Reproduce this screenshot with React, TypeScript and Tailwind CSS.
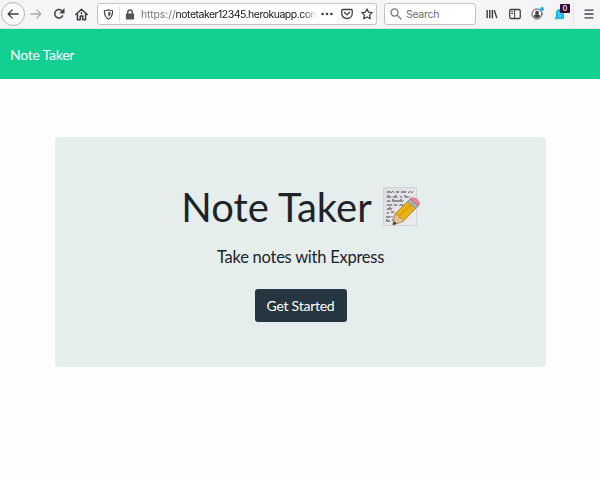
import type { ReactNode } from 'react';

type IconProps = { className?: string; children: ReactNode; box?: string };

function Icon({ className = '', children, box = '0 0 16 16' }: IconProps) {
  return (
    <svg viewBox={box} fill="none" stroke="currentColor" strokeWidth="1.7" strokeLinecap="round" strokeLinejoin="round" className={`shrink-0 ${className}`}>
      {children}
    </svg>
  );
}

function AddressBar() {
  return (
    <div className="ml-[9px] flex h-[22px] w-[280px] shrink-0 items-center rounded-[3px] border border-[#c4c4c7] bg-white text-[#3f3f43]">
      <Icon className="ml-[5px] size-[11px]">
        <path d="M8 1.2c2 .9 4 1.3 6 1.3 0 6-1.200 9.800-6 12.300C3.200 12.300 2 8.500 2 2.500c2 0 4-.4 6-1.300z" />
        <path d="M8 4.500v6.500c2-1.500 2.700-3.300 2.800-5.700z" fill="currentColor" strokeWidth=".5" />
      </Icon>
      <div className="ml-[5px] h-[15px] w-px bg-[#dddde0]" />
      <svg viewBox="0 0 10 12" className="ml-[5px] h-[11px] w-[10px] shrink-0">
        <path d="M2.500 6V3.500a2.500 2.500 0 0 1 5 0V6" fill="none" stroke="#555558" strokeWidth="1.600" />
        <rect x=".5" y="5" width="9" height="6.500" rx="1" fill="#555558" />
      </svg>
      <div className="ml-[6px] w-[176px] pt-px text-[10.500px] leading-[20px] tracking-[-0.500px] whitespace-nowrap text-[#151518] [mask-image:linear-gradient(to_right,black_92%,transparent)]">
        <span className="tracking-[-0.100px] text-[#77777b]">https://</span>notetaker12345.herokuapp.con
      </div>
      <svg viewBox="0 0 12 4" className="ml-[4px] h-[4px] w-[12px] shrink-0" fill="currentColor">
        <circle cx="1.600" cy="2" r="1.350" />
        <circle cx="6" cy="2" r="1.350" />
        <circle cx="10.400" cy="2" r="1.350" />
      </svg>
      <Icon className="ml-[8px] size-[12px]">
        <path d="M2.200 2h11.600c.7 0 1.200.5 1.200 1.200V7c0 4-3 7-7 7s-7-3-7-7V3.200C1 2.500 1.500 2 2.200 2z" />
        <path d="m4.700 6 3.300 3.200L11.300 6" />
      </Icon>
      <Icon className="ml-[8px] size-[12px]">
        <path d="m8 1.200 2.100 4.400 4.800.6-3.500 3.300.9 4.800L8 12l-4.300 2.300.9-4.800-3.500-3.300 4.800-.6z" />
      </Icon>
    </div>
  );
}

function BrowserBar() {
  return (
    <div className="flex h-[29px] items-center border-b border-[#e4dfe3] bg-[#f5f4f7] text-[#3f3f43]">
      <div className="ml-px flex size-[24px] shrink-0 items-center justify-center rounded-full border border-[#b5b5b9] bg-[#fafafc]">
        <Icon className="size-[12px]"><path d="M15 8H1.500M7 2.500 1.500 8 7 13.500" /></Icon>
      </div>
      <Icon className="ml-[5px] size-[12px] text-[#aaaaae]"><path d="M1 8h13.500M9 2.500 14.500 8 9 13.500" /></Icon>
      <Icon className="ml-[11px] size-[12px]">
        <path d="M12.800 10.500A5.600 5.600 0 1 1 12.500 4.500L14 6" strokeWidth="2" />
        <path d="M14.800 1.500v5.300H9.500z" fill="currentColor" strokeWidth="1" />
      </Icon>
      <Icon className="ml-[10px] size-[13px]">
        <path d="M1 8 8 1.500 15 8M3 7.500V14.500h3.500V10h3v4.500H13V7.500" strokeWidth="1.900" />
        <path d="M8 5.500v1.500" />
      </Icon>
      <AddressBar />
      <div className="ml-[7px] flex h-[22px] w-[92px] shrink-0 items-center rounded-[3px] border border-[#c4c4c7] bg-white">
        <Icon className="ml-[5px] size-[12px] text-[#77777b]"><circle cx="6" cy="6" r="4.700" /><path d="m9.600 9.600 5.200 5.200" /></Icon>
        <span className="ml-[4px] pt-px text-[10.500px] leading-[20px] tracking-[-0.300px] text-[#6d6d71]">Search</span>
      </div>
      <Icon className="ml-[10px] size-[12px]">
        <path d="M1.500 2.500v11M5 2.500v11M8.500 2.500v11M11 3l3.500 10.500" strokeLinecap="butt" strokeWidth="1.900" />
      </Icon>
      <Icon className="ml-[11px] size-[12px]">
        <rect x="1" y="2" width="14" height="12" rx="1.800" />
        <path d="M7.500 2v12M3.500 5h1.500M3.500 7.500h1.500" strokeWidth="1.300" />
      </Icon>
      <div className="relative ml-[10px] size-[12px] shrink-0">
        <Icon className="size-[12px]">
          <circle cx="8" cy="8" r="6.700" strokeWidth="1.200" />
          <circle cx="8" cy="6" r="2.500" fill="currentColor" stroke="none" />
          <path d="M3.700 11c0-2 2-2.800 4.300-2.800s4.300.8 4.300 2.800c-1 1.500-2.500 2.200-4.300 2.200S4.700 12.500 3.700 11z" fill="currentColor" stroke="none" />
        </Icon>
        <span className="absolute -top-[1px] left-[9px] size-[4px] rounded-full bg-[#12b5ed]" />
      </div>
      <div className="relative ml-[12px] h-[12px] w-[10px] shrink-0">
        <svg viewBox="0 0 10 12" className="h-[12px] w-[10px]" fill="#12b5ed">
          <path d="M1 11.500V5a4 4 0 0 1 8 0v6.500L7.500 10.500 6 11.500 5 10.500 4 11.500 2.500 10.500zM0 9h1v2.500H0z" />
          <path d="M3 5.500h1.500M6 5.500h1.500M3.500 8h3" stroke="#f4faff" strokeWidth=".8" />
        </svg>
        <span className="absolute -top-[4px] left-[5px] flex h-[9px] w-[10px] items-center justify-center rounded-[1px] bg-[#35072e] text-[7.500px] leading-none font-medium text-white">0</span>
      </div>
      <div className="ml-[8px] h-[24px] w-px bg-[#e2e1e5]" />
      <svg viewBox="0 0 10 10" className="ml-[10px] size-[10px] shrink-0" stroke="currentColor" strokeWidth="1.300">
        <path d="M.5 1.200h9M.5 5h9M.5 8.800h9" />
      </svg>
    </div>
  );
}

function MemoEmoji() {
  return (
    <svg viewBox="0 0 40 44" className="h-[44px] w-[40px] shrink-0">
      <defs>
        <linearGradient id="paper" x1="0" y1="0" x2="1" y2="1">
          <stop offset="0" stopColor="#dddcdf" />
          <stop offset="1" stopColor="#ededf0" />
        </linearGradient>
      </defs>
      <rect x="1.500" y="2.500" width="33" height="38" fill="url(#paper)" stroke="#cfcfd3" strokeWidth=".8" />
      <g fill="none" stroke="#5c5c60" strokeWidth=".7" strokeLinejoin="round">
        <path d="m5 8 1-2 1 2 1-2 1 2 2-2 1 2m2 0 1-2 1 2 1-2m2 2 1-2 1 2 1-2 1 2 1-2m2 1 1 1 1-2 2 2 1-2" />
        <path d="m5 13 1-3 1 3 1-2 1 2m2 0 1-2 1 2 1-3 1 3m3 0 1-2 1 2m2-1 1-2 1 3 1-2 1 2 2-2" />
        <path d="m5 17 1-2 1 2 1-2m2 2 1-3 1 3 1-2 1 2 1-2 1 2 1-2 1 2 1-3 1 3 2-2" />
        <path d="m5 21 1-2 1 2 1-2 1 2 1-2m2 2 1-2 1 2 1-2m2 1 1 1 1-2 1 2 1-2M5 25l1-2 1 2 1-3 1 3 1-2" />
        <path d="m5 29 1-2 1 2m2-1 1-2 1 2 1-2M4 33l1-2 1 2 1-2 1 2 2-2 1 2M4 37l1-3 1 3 1-2 1 2m2-1 1-2" />
      </g>
      <path d="m11 40 2-11L26.500 15.500l8 7L21.500 36z" fill="#e8b314" stroke="#8f6816" strokeWidth=".7" />
      <path d="m17 31 13.500-12.500" stroke="#d39b08" strokeWidth="1.500" />
      <path d="m11 40 2-11 3 1.500 1 2.400 3.200.6 1.300 2.500z" fill="#eac397" stroke="#9c7550" strokeWidth=".5" />
      <path d="m11 40 .8-4 3 2.700z" fill="#3d3935" />
      <path d="m25.500 16.500 2.500-2.500 8.300 7-2.500 2.500z" fill="#a6b5bb" stroke="#687e87" strokeWidth=".6" />
      <path d="m28 14 1.500-1c3-1.300 8.600 2.700 7.700 6.500l-.9 1.500z" fill="#ec8690" stroke="#b9535e" strokeWidth=".6" />
    </svg>
  );
}

export default function App() {
  return (
    <div className="h-[478px] w-[600px] overflow-hidden bg-[#fdfdfe] font-[Inter,sans-serif]">
      <BrowserBar />
      <div className="font-[Lato,sans-serif]">
        <nav className="flex h-[50px] items-center bg-[#11ce91] pl-[10px] text-[14px] tracking-[-0.250px] text-white">
          <a className="pt-px leading-5">Note Taker</a>
        </nav>
        <main className="mt-[58px] ml-[55px] flex h-[230px] w-[491px] flex-col items-center rounded-[4px] bg-[#e6eded] text-[#1c2429]">
          <h1 className="mt-[45px] flex h-[50px] items-center pl-[2px] text-[40px] leading-[50px]">
            <span>Note Taker</span>
            <span className="ml-[10px]"><MemoEmoji /></span>
          </h1>
          <p className="mt-[13px] text-[16.500px] leading-[24px] tracking-[-0.250px]">Take notes with Express</p>
          <button className="mt-[20px] h-[33px] w-[92px] rounded-[3px] bg-[#263640] text-[14px] leading-[34px] tracking-[-0.250px] text-white">Get Started</button>
        </main>
      </div>
    </div>
  );
}
